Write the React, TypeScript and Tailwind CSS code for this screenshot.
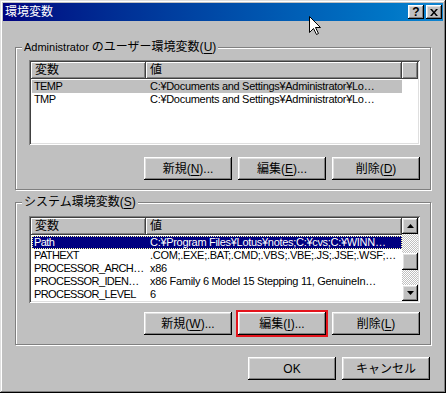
import type { ReactNode } from 'react';

const RAISED =
  'shadow-[inset_-1px_-1px_#000,inset_1px_1px_#fff,inset_-2px_-2px_#808080,inset_2px_2px_#dfdfdf]';

function Btn({ children, ring }: { children: ReactNode; ring?: boolean }) {
  return (
    <button
      className={`h-[23px] w-[88px] bg-[#c0c0c0] text-[12px] leading-none text-black flex items-center justify-center shadow-[inset_-1px_-1px_#000,inset_1px_1px_#fff,inset_-2px_-2px_#808080,inset_2px_2px_#dfdfdf] ${
        ring ? 'outline-2 outline-solid outline-[#e4141c]' : ''
      }`}
    >
      {children}
    </button>
  );
}

function U({ children }: { children: ReactNode }) {
  return <span className="underline underline-offset-2">{children}</span>;
}

function HeaderCell({ w, children }: { w: string; children?: ReactNode }) {
  return (
    <div
      className={`${w} h-[17px] bg-[#c0c0c0] pl-[4px] text-[12px] leading-[17px] shadow-[inset_-1px_-1px_#404040,inset_1px_1px_#fff,inset_-2px_-2px_#808080]`}
    >
      {children}
    </div>
  );
}

type Row = { name: string; value: string; sel?: 'gray' | 'blue' };

function Rows({ rows }: { rows: Row[] }) {
  return (
    <div className="pt-[1px] flex flex-col">
      {rows.map((r) => (
        <div
          key={r.name}
          className={`ml-[1px] w-[370px] h-[13px] flex text-[11px] leading-[13px] tracking-[-0.3px] ${
            r.sel === 'gray'
              ? 'bg-[#c0c0c0] text-black'
              : r.sel === 'blue'
              ? 'bg-[#000080] text-white outline-1 outline-dotted outline-[#ffffa0] -outline-offset-1'
              : 'text-black'
          }`}
        >
          <div className="w-[114px] pl-[2px] tracking-[-0.6px] overflow-hidden whitespace-nowrap">{r.name}</div>
          <div className="w-[256px] pl-[4px] overflow-hidden whitespace-nowrap">{r.value}</div>
        </div>
      ))}
    </div>
  );
}

function Arrow({ up }: { up?: boolean }) {
  return (
    <svg width="7" height="4" viewBox="0 0 7 4">
      {up ? <path d="M3.5 0 L7 4 L0 4 Z" fill="#000" /> : <path d="M0 0 L7 0 L3.5 4 Z" fill="#000" />}
    </svg>
  );
}

function Group({ label, children }: { label: ReactNode; children: ReactNode }) {
  return (
    <div className="relative h-[143px] border border-[#808080] shadow-[inset_1px_1px_#fff,1px_1px_#fff] flex flex-col pl-[13px] pr-[10px]">
      <div className="absolute left-[6px] top-[-8px] bg-[#c0c0c0] px-[2px] text-[12px] leading-[14px] whitespace-nowrap">
        {label}
      </div>
      {children}
    </div>
  );
}

const SUNKEN =
  'bg-white p-[2px] shadow-[inset_1px_1px_#808080,inset_-1px_-1px_#fff,inset_2px_2px_#404040,inset_-2px_-2px_#dfdfdf]';

export default function App() {
  const userRows: Row[] = [
    { name: 'TEMP', value: 'C:¥Documents and Settings¥Administrator¥Lo…', sel: 'gray' },
    { name: 'TMP', value: 'C:¥Documents and Settings¥Administrator¥Lo…' },
  ];
  const sysRows: Row[] = [
    { name: 'Path', value: 'C:¥Program Files¥Lotus¥notes;C:¥cvs;C:¥WINN…', sel: 'blue' },
    { name: 'PATHEXT', value: '.COM;.EXE;.BAT;.CMD;.VBS;.VBE;.JS;.JSE;.WSF;…' },
    { name: 'PROCESSOR_ARCH…', value: 'x86' },
    { name: 'PROCESSOR_IDEN…', value: 'x86 Family 6 Model 15 Stepping 11, GenuineIn…' },
    { name: 'PROCESSOR_LEVEL', value: '6' },
  ];

  return (
    <div className="font-['Liberation_Sans','Noto_Sans_CJK_JP',sans-serif] text-black">
      <div className="relative w-[446px] h-[393px] bg-[#c0c0c0] p-[3px] flex flex-col shadow-[inset_-1px_-1px_#000,inset_1px_1px_#dfdfdf,inset_-2px_-2px_#808080,inset_2px_2px_#fff]">
        {/* title bar */}
        <div className="h-[18px] bg-linear-to-r from-[#000080] to-[#1084d0] flex items-center pl-[2px] pr-[1px]">
          <span className="text-white text-[12px] leading-none">環境変数</span>
          <div className={`ml-auto w-[16px] h-[14px] bg-[#c0c0c0] ${RAISED} flex items-center justify-center text-[12px] font-bold leading-none`}>
            ?
          </div>
          <div className={`ml-[2px] w-[16px] h-[14px] bg-[#c0c0c0] ${RAISED} flex items-center justify-center`}>
            <svg width="8" height="7" viewBox="0 0 8 7">
              <path d="M0 0 L2 0 L4 2.5 L6 0 L8 0 L5 3.5 L8 7 L6 7 L4 4.5 L2 7 L0 7 L3 3.5 Z" fill="#000" />
            </svg>
          </div>
        </div>

        <div className="px-[12px] flex flex-col">
          {/* user variables */}
          <div className="mt-[26px]">
            <Group
              label={
                <>
                  <span className="text-[11px]">Administrator </span>のユーザー環境変数(<U>U</U>)
                </>
              }
            >
              <div className={`mt-[12px] w-[391px] h-[85px] ${SUNKEN} flex flex-col`}>
                <div className="flex">
                  <HeaderCell w="w-[115px]">変数</HeaderCell>
                  <HeaderCell w="w-[256px]">値</HeaderCell>
                  <HeaderCell w="flex-1" />
                </div>
                <Rows rows={userRows} />
              </div>
              <div className="mt-[12px] flex justify-end gap-[6px]">
                <Btn>新規(<U>N</U>)...</Btn>
                <Btn>編集(<U>E</U>)...</Btn>
                <Btn>削除(<U>D</U>)</Btn>
              </div>
            </Group>
          </div>

          {/* system variables */}
          <div className="mt-[12px]">
            <Group
              label={
                <>
                  システム環境変数(<U>S</U>)
                </>
              }
            >
              <div className={`mt-[13px] w-[391px] h-[87px] ${SUNKEN} flex`}>
                <div className="w-[371px] flex flex-col">
                  <div className="flex">
                    <HeaderCell w="w-[115px]">変数</HeaderCell>
                    <HeaderCell w="w-[256px]">値</HeaderCell>
                  </div>
                  <Rows rows={sysRows} />
                </div>
                <div className="w-[16px] flex flex-col">
                  <div className={`h-[16px] bg-[#c0c0c0] ${RAISED} flex items-center justify-center`}>
                    <Arrow up />
                  </div>
                  <div className="flex-1 bg-[repeating-conic-gradient(#c0c0c0_0_25%,#fff_0_50%)] bg-[length:2px_2px] flex flex-col">
                    <div className={`mt-[19px] h-[17px] bg-[#c0c0c0] ${RAISED}`} />
                  </div>
                  <div className={`h-[16px] bg-[#c0c0c0] ${RAISED} flex items-center justify-center`}>
                    <Arrow />
                  </div>
                </div>
              </div>
              <div className="mt-[9px] flex justify-end gap-[6px]">
                <Btn>新規(<U>W</U>)...</Btn>
                <Btn ring>編集(<U>I</U>)...</Btn>
                <Btn>削除(<U>L</U>)</Btn>
              </div>
            </Group>
          </div>

          <div className="mt-[12px] flex justify-end gap-[6px] pr-[1px]">
            <Btn>OK</Btn>
            <Btn>キャンセル</Btn>
          </div>
        </div>

        {/* mouse cursor */}
        <svg className="absolute left-[309px] top-[16px]" width="13" height="20" viewBox="0 0 13 20">
          <path d="M0.5 0.5 V16.5 L4.5 12.5 L7.5 18.5 L9.5 17.5 L6.5 11.5 H11.5 Z" fill="#fff" stroke="#000" strokeWidth="1" />
        </svg>
      </div>
    </div>
  );
}
